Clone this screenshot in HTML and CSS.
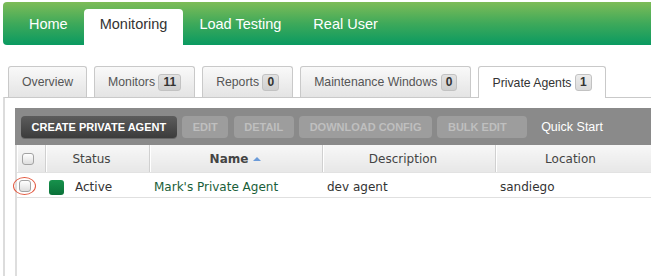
FILE: index.html
```html
<!DOCTYPE html>
<html>
<head>
<meta charset="utf-8">
<link rel="stylesheet" href="styles.css">
</head>
<body>
<div class="nav">
  <a class="nav-item">Home</a>
  <a class="nav-item active">Monitoring</a>
  <a class="nav-item">Load Testing</a>
  <a class="nav-item">Real User</a>
</div>
<div class="subtabs">
  <div class="tab">Overview</div>
  <div class="tab">Monitors <span class="badge">11</span></div>
  <div class="tab">Reports <span class="badge">0</span></div>
  <div class="tab">Maintenance Windows <span class="badge">0</span></div>
  <div class="tab active">Private Agents <span class="badge">1</span></div>
</div>
<div class="panel">
  <div class="grid">
    <div class="toolbar">
      <span class="btn primary">CREATE PRIVATE AGENT</span>
      <span class="btn">EDIT</span>
      <span class="btn">DETAIL</span>
      <span class="btn">DOWNLOAD CONFIG</span>
      <span class="btn bulk">BULK EDIT</span>
      <span class="quick">Quick Start</span>
    </div>
    <table class="table">
      <colgroup>
        <col class="c-cb"><col class="c-status"><col class="c-name"><col class="c-desc"><col class="c-loc">
      </colgroup>
      <thead>
        <tr>
          <th class="th-cb"><span class="cb"></span></th>
          <th>Status</th>
          <th class="th-name"><b>Name</b><span class="sort"></span></th>
          <th>Description</th>
          <th>Location</th>
        </tr>
      </thead>
      <tbody>
        <tr>
          <td class="td-cb"><span class="cb"></span><span class="ring"></span></td>
          <td><div class="status"><span class="dot"></span>Active</div></td>
          <td class="name">Mark's Private Agent</td>
          <td>dev agent</td>
          <td>sandiego</td>
        </tr>
      </tbody>
    </table>
  </div>
</div>
</body>
</html>
```
FILE: styles.css
```css
html, body {
  margin: 0;
  padding: 0;
  background: #fff;
}
body {
  font-family: "Liberation Sans", Arial, Helvetica, sans-serif;
  width: 651px;
  height: 276px;
  overflow: hidden;
}

/* top nav */
.nav {
  margin: 2px 0 0 3px;
  height: 43px;
  background: linear-gradient(#7ebc57 0%, #3ea95a 50%, #0a9a61 100%);
  border-radius: 4px 0 0 4px;
  display: flex;
  align-items: flex-end;
  padding-left: 10px;
}
.nav-item {
  padding: 0 16px;
  height: 36px;
  line-height: 30px;
  font-size: 14.5px;
  color: #fff;
  white-space: nowrap;
}
.nav-item.active {
  background: #fff;
  color: #333;
  border-radius: 4px 4px 0 0;
}

/* sub tabs */
.subtabs {
  margin-top: 21px;
  padding-left: 8px;
  display: flex;
  gap: 7px;
  align-items: flex-end;
  position: relative;
  z-index: 2;
}
.tab {
  height: 30px;
  display: flex;
  align-items: center;
  padding: 0 13px;
  border: 1px solid #c9c9c9;
  border-bottom: none;
  border-radius: 3px 3px 0 0;
  background: linear-gradient(#f9f9f9, #e4e4e4);
  font-size: 12.25px;
  color: #555;
  white-space: pre;
}
.tab.active {
  background: #fff;
  color: #333;
  height: 31px;
  margin-bottom: -1px;
}
.badge {
  display: inline-block;
  height: 15px;
  line-height: 15px;
  padding: 0 4px;
  border: 1px solid #c2c2c2;
  border-radius: 3px;
  background: linear-gradient(#e2e2e2, #cfcfcf);
  color: #333;
  font-size: 12px;
  font-weight: bold;
}
.tab.active .badge {
  background: linear-gradient(#ececec, #dadada);
}

/* panel */
.panel {
  margin-left: 3px;
  border-top: 1px solid #c9c9c9;
  border-left: 2px solid #dcdcdc;
  padding: 10px 0 0 10px;
  height: 168px;
}
.grid {
  border-left: 2px solid #dedede;
  height: 168px;
}
.toolbar {
  margin-left: -2px;
  height: 37px;
  background: #8a8a8a;
  display: flex;
  align-items: center;
  gap: 5.5px;
  padding-left: 6px;
}
.btn {
  height: 22px;
  line-height: 22px;
  padding: 0 10.5px;
  border-radius: 4px;
  background: #9d9d9d;
  color: #bfbfbf;
  font-size: 11px;
  font-weight: bold;
  white-space: nowrap;
}
.btn.primary {
  background: linear-gradient(#5c5c5c, #3b3b3b);
  color: #fff;
  box-shadow: 0 1px 0 rgba(0,0,0,0.25);
}
.btn.bulk {
  padding-right: 20px;
}
.quick {
  margin-left: 9px;
  color: #fff;
  font-size: 12.5px;
}

/* table */
.table {
  border-collapse: collapse;
  table-layout: fixed;
  width: 640px;
  font-family: "DejaVu Sans", Verdana, sans-serif;
  font-size: 12px;
}
.c-cb { width: 28px; }
.c-status { width: 104px; }
.c-name { width: 173px; }
.c-desc { width: 173px; }
.c-loc { width: 162px; }

.table th {
  height: 27px;
  padding: 0 11px 0 0;
  background: linear-gradient(#f7f7f7, #e7e7e7);
  border-right: 1px solid #d0d0d0;
  border-bottom: 1px solid #e2e2e2;
  box-shadow: inset 1px 0 0 #fff;
  color: #444;
  font-weight: normal;
  text-align: center;
  white-space: nowrap;
}
.table th.th-name {
  padding-right: 0;
}
.table th.th-cb {
  padding: 0 0 0 5px;
  text-align: left;
}
.sort {
  display: inline-block;
  width: 0;
  height: 0;
  margin-left: 5px;
  vertical-align: 2px;
  border-left: 4px solid transparent;
  border-right: 4px solid transparent;
  border-bottom: 4px solid #6b9bd9;
}
.cb {
  display: inline-block;
  width: 10px;
  height: 10px;
  border: 1px solid #a3a3a3;
  border-radius: 3px;
  background: linear-gradient(#fff, #dedede);
  vertical-align: middle;
}
.table td {
  padding: 5px 0 0 5px;
  height: 19px;
  line-height: 19px;
  border-bottom: 1px solid #e0e0e0;
  color: #333;
  white-space: nowrap;
}
.table td.td-cb {
  padding-left: 2px;
  position: relative;
}
.td-cb .cb {
  vertical-align: -1px;
}
.ring {
  position: absolute;
  left: -4px;
  top: 4px;
  width: 21px;
  height: 16px;
  border: 1.5px solid #e2583f;
  border-radius: 50%;
}
.status {
  display: flex;
  align-items: center;
  gap: 11px;
}
.table td .status {
  margin-left: -1px;
}
.dot {
  width: 15px;
  height: 15px;
  border-radius: 3px;
  background: linear-gradient(#17924c, #0a7139);
}
.table td.name {
  color: #195e39;
}
```
